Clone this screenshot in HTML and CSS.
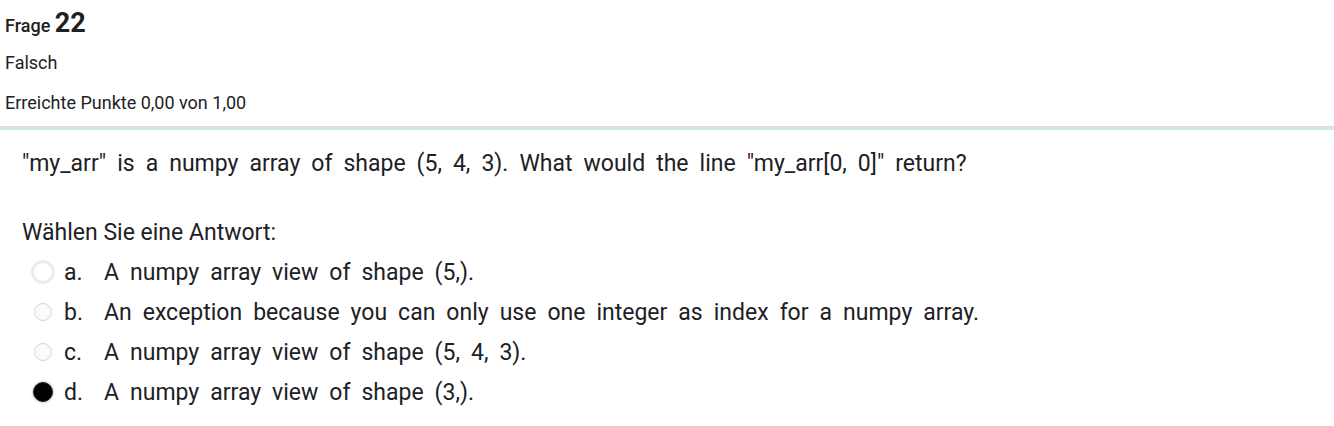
FILE: index.html
```html
<!DOCTYPE html>
<html lang="de">
<head>
<meta charset="utf-8">
<link rel="stylesheet" href="styles.css">
</head>
<body>
<div class="info">
  <h3 class="no">Frage <span class="qno">22</span></h3>
  <div class="state">Falsch</div>
  <div class="grade">Erreichte Punkte 0,00 von 1,00</div>
</div>
<div class="content">
  <div class="qtext">"my_arr" is a numpy array of shape (5, 4, 3). What would the line "my_arr[0, 0]" return?</div>
  <div class="prompt">Wählen Sie eine Antwort:</div>
  <div class="answers">
    <div class="opt"><span class="radio big"></span><span class="letter">a.</span><span class="txt">A numpy array view of shape (5,).</span></div>
    <div class="opt"><span class="radio"></span><span class="letter">b.</span><span class="txt">An exception because you can only use one integer as index for a numpy array.</span></div>
    <div class="opt"><span class="radio"></span><span class="letter">c.</span><span class="txt">A numpy array view of shape (5, 4, 3).</span></div>
    <div class="opt"><span class="radio checked"></span><span class="letter">d.</span><span class="txt">A numpy array view of shape (3,).</span></div>
  </div>
</div>
</body>
</html>
```

FILE: styles.css
```css
html, body {
  margin: 0;
  padding: 0;
  background: #fff;
}
body {
  font-family: Roboto, "Liberation Sans", sans-serif;
  color: #1d2125;
}
.info {
  padding: 6px 5px 12px 5px;
  border-bottom: 3px solid #d3e6ec;
  box-shadow: 0 -1px 0 #dcdcdc inset;
}
.no {
  margin: 0;
  font-size: 18px;
  font-weight: 500;
  line-height: 34px;
}
.qno {
  font-size: 27px;
  font-weight: 700;
}
.state {
  font-size: 18px;
  line-height: 24px;
  margin-top: 8px;
}
.grade {
  font-size: 18px;
  line-height: 24px;
  margin-top: 16px;
}
.content {
  padding: 19px 22px;
  font-size: 23px;
}
.qtext {
  word-spacing: 5.3px;
  line-height: 30px;
}
.prompt {
  margin-top: 39px;
  line-height: 30px;
}
.answers {
  margin-top: 4px;
  display: flex;
  flex-direction: column;
}
.opt {
  display: flex;
  align-items: center;
  height: 40px;
  word-spacing: 5.3px;
}
.radio {
  width: 18px;
  height: 18px;
  border-radius: 50%;
  border: 1px solid #d6d6d6;
  background: #fafafa;
  box-sizing: border-box;
  margin-left: 12px;
  margin-right: 12px;
  flex: none;
}
.radio.big {
  width: 24px;
  height: 24px;
  margin-left: 9px;
  margin-right: 9px;
  border: 3px solid #ededed;
  background: #fff;
}
.radio.checked {
  width: 20px;
  height: 20px;
  margin-left: 11px;
  margin-right: 11px;
  background: #000;
  border: 1px solid #222;
  box-shadow: 0 0 2px 1px rgba(0,0,0,0.15);
}
.letter {
  width: 40px;
  flex: none;
}
```
